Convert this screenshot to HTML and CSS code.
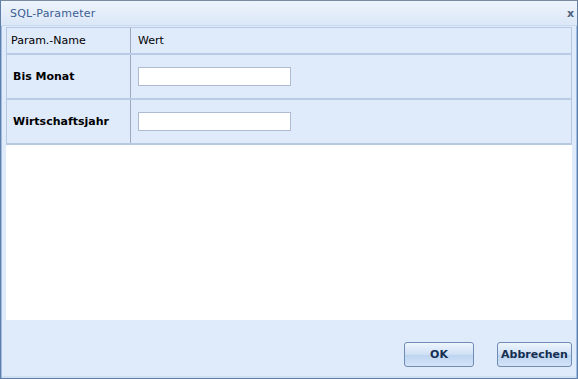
FILE: index.html
```html
<!DOCTYPE html>
<html lang="de">
<head>
  <meta charset="UTF-8" />
  <title>SQL-Parameter</title>
  <link rel="stylesheet" href="styles.css">
</head>
<body>
  <div class="window">
    <div class="titlebar">
      <span class="title">SQL-Parameter</span>
      <span class="close">x</span>
    </div>

    <div class="content">
      <!-- Parameter-Tabelle -->
      <div class="grid">
        <div class="row head">
          <div class="cell name">Param.-Name</div>
          <div class="cell value">Wert</div>
        </div>
        <div class="row">
          <div class="cell name"><b>Bis Monat</b></div>
          <div class="cell value"><input type="text" class="field" autofocus></div>
        </div>
        <div class="row">
          <div class="cell name"><b>Wirtschaftsjahr</b></div>
          <div class="cell value"><input type="text" class="field"></div>
        </div>
      </div>
      <div class="empty"></div>
    </div>

    <div class="footer">
      <button class="btn ok">OK</button>
      <button class="btn cancel">Abbrechen</button>
    </div>
  </div>
</body>
</html>
```

FILE: styles.css
```css
* {
  box-sizing: border-box;
  margin: 0;
  padding: 0;
}

body {
  background: #ffffff;
  font-family: 'DejaVu Sans', sans-serif;
  font-size: 11px;
  color: #000;
}

.window {
  width: 578px;
  height: 379px;
  display: flex;
  flex-direction: column;
  background: #dfeafb;
  border: 1px solid #5f7fa8;
  border-top-color: #7a8a9e;
  box-shadow: inset 1px 0 0 #9fbce3, inset -1px 0 0 #9fbce3, inset 0 -2px 0 #cfdff4;
}

.titlebar {
  height: 25px;
  display: flex;
  align-items: center;
  justify-content: space-between;
  padding: 0 3px 0 9px;
  background: linear-gradient(to bottom, #eef4fc, #dbe7f7);
  border-bottom: 1px solid #c9d9ee;
}

.title {
  color: #3c5f93;
  font-size: 11px;
  letter-spacing: 0.2px;
}

.close {
  color: #4b5f7c;
  font-weight: bold;
  font-size: 11px;
}

.content {
  flex: 1;
  display: flex;
  flex-direction: column;
  margin: 1px 5px 0 5px;
}

.grid {
  border: 1px solid #b6c8e2;
  border-bottom-width: 2px;
  background: #dfeafb;
}

.row {
  display: flex;
  height: 45px;
  border-top: 2px solid #b9cbe5;
}

.row.head {
  height: 25px;
  border-top: none;
}

.cell {
  display: flex;
  align-items: center;
}

.cell.name {
  width: 124px;
  padding-left: 5px;
  border-right: 1px solid #9aaabd;
}

.cell.value {
  flex: 1;
  padding-left: 7px;
}

.row.head .cell.name {
  padding-left: 4px;
}

.cell b {
  font-size: 11px;
  padding-left: 1px;
}

.field {
  width: 153px;
  height: 19px;
  border: 1px solid #aebbd0;
  background: #fff;
  font-family: inherit;
  font-size: 11px;
  outline: none;
}

.empty {
  flex: 1;
  background: #fff;
}

.footer {
  height: 58px;
  display: flex;
  justify-content: flex-end;
  align-items: flex-start;
  gap: 23px;
  padding: 22px 5px 0 0;
}

.btn {
  height: 25px;
  font-family: inherit;
  font-size: 11px;
  font-weight: bold;
  color: #142d50;
  border: 1px solid #6f8cb5;
  border-radius: 3px;
  background: linear-gradient(to bottom, #eef5fd, #cfe0f5 50%, #bcd3ef 51%, #d3e4f8);
}

.btn.ok {
  width: 70px;
}

.btn.cancel {
  width: 75px;
}
```
